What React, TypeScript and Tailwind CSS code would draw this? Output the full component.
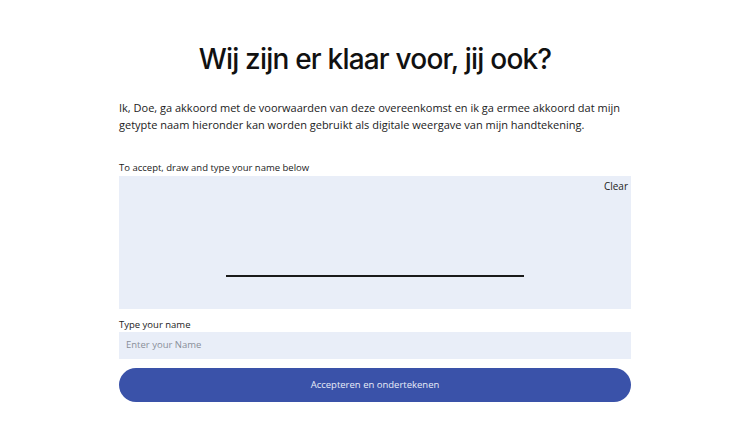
export default function App() {
  return (
    <div className="min-h-screen bg-white flex justify-center" style={{ fontFamily: '"Open Sans", sans-serif' }}>
      <div className="w-[512px] pt-[40px]">
        <h1 className="text-center text-[28px] leading-[38px] font-medium text-[#111] tracking-[-0.8px]" style={{ fontFamily: 'Inter, sans-serif' }}>
          Wij zijn er klaar voor, jij ook?
        </h1>
        <p className="mt-[21px] text-[11px] leading-[17px] text-[#222]">
          Ik, Doe, ga akkoord met de voorwaarden van deze overeenkomst en ik ga ermee akkoord dat mijn getypte naam hieronder kan worden gebruikt als digitale weergave van mijn handtekening.
        </p>
        <div className="mt-[28px] text-[9.5px] leading-[14px] text-[#222]">To accept, draw and type your name below</div>
        <div className="mt-[1px] h-[133px] bg-[#e9eef8] flex flex-col">
          <div className="flex justify-end pr-[3px] pt-[2px]">
            <button className="text-[10px] leading-[16px] text-[#222]">Clear</button>
          </div>
          <div className="mt-[81px] ml-[107px] w-[298px] h-[2px] bg-[#1a1a1a]" />
        </div>
        <div className="mt-[9px] text-[9.5px] leading-[14px] text-[#222]">Type your name</div>
        <div className="h-[27px] bg-[#e9eef8] flex items-center px-[7px]">
          <input className="w-full bg-transparent outline-none text-[9.5px] text-[#333] placeholder:text-[#8a8f99]" placeholder="Enter your Name" />
        </div>
        <button className="mt-[9px] w-full h-[34px] rounded-full bg-[#3a52a9] text-[9.5px] text-[#e8ecf8]">
          Accepteren en ondertekenen
        </button>
      </div>
    </div>
  );
}
